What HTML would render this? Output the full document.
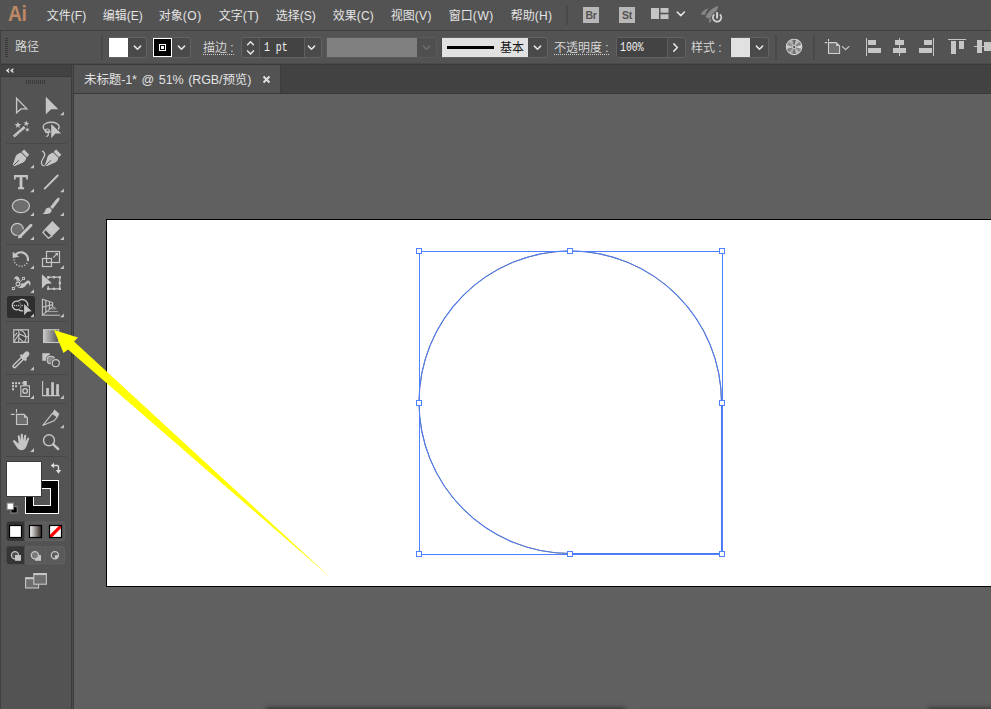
<!DOCTYPE html>
<html lang="zh-CN">
<head>
<meta charset="utf-8">
<title>未标题-1* @ 51% (RGB/预览)</title>
<style>
html,body{margin:0;padding:0;}
body{width:991px;height:709px;overflow:hidden;position:relative;background:#606060;
  font-family:"Liberation Sans","Noto Sans CJK SC",sans-serif;font-size:12px;color:#dcdcdc;}
.abs{position:absolute;}
#menubar{left:0;top:0;width:991px;height:30px;background:#535353;}
#menubar .mi{position:absolute;top:2px;height:30px;line-height:29px;font-size:12px;color:#e4e4e4;white-space:nowrap;}
#logo{position:absolute;left:8px;top:0;height:30px;line-height:28px;font-size:22.5px;font-weight:bold;color:#bd8864;letter-spacing:-0.5px;transform-origin:0 50%;transform:scaleX(0.86);}
#tabstrip{left:74px;top:65px;width:917px;height:29px;background:#424242;border-bottom:1px solid #3a3a3a;box-sizing:border-box;}
#doctab{left:0;top:0;width:206px;height:28px;background:#535353;border-right:1px solid #3c3c3c;}
#doctab .t{position:absolute;left:10px;top:1px;line-height:28px;font-size:12.5px;color:#e2e2e2;white-space:nowrap;word-spacing:1.3px;letter-spacing:-0.1px;}
#toolbar{left:0;top:65px;width:72px;height:644px;background:#535353;}
#tbhead{left:0;top:0;width:72px;height:12px;background:#424242;border-bottom:1px solid #3a3a3a;box-sizing:border-box;}
#tbborder{left:71px;top:65px;width:3px;height:644px;background:linear-gradient(to right,#3c3c3c 0,#3c3c3c 1px,#4c4c4c 1px,#4c4c4c 2px,#3c3c3c 2px);}
#canvas{left:74px;top:94px;width:917px;height:615px;background:#606060;}
#artboard{left:106px;top:219px;width:900px;height:366px;background:#fff;border:1px solid #000;}

#ctrlbar{left:0;top:30px;width:991px;height:35px;background:#535353;border:none;}
.hl{position:absolute;left:0;width:991px;height:1px;}
.vsep{position:absolute;top:5px;width:2px;height:25px;background:#4a4a4a;}
.grp{position:absolute;top:7px;height:21px;box-sizing:border-box;border:1px solid #626262;border-radius:3px;background:#4a4a4a;overflow:hidden;}
.grp>*{position:absolute;top:0;height:19px;}
.grp.sq{border-radius:0 3px 3px 0;border-left-color:transparent;}
.fld{background:#434343;}
.appb{width:16px;height:16px;background:#b8b8b8;color:#535353;font-size:10.5px;line-height:17px;text-align:center;font-weight:bold;letter-spacing:-0.3px;}
.lbl{position:absolute;white-space:nowrap;color:#dcdcdc;font-size:12px;line-height:12px;height:12px;font-weight:350;}
.dot{border-bottom:1px dotted #d0d0d0;padding-bottom:0;}
</style>
</head>
<body>
<!-- MENU BAR -->
<div id="menubar" class="abs">
  <div id="logo">Ai</div>
  <div class="mi" style="left:46.8px">文件<span style="letter-spacing:0.00px">(F)</span></div>
  <div class="mi" style="left:102.8px">编辑<span style="letter-spacing:0.00px">(E)</span></div>
  <div class="mi" style="left:158.8px">对象<span style="letter-spacing:0.53px">(O)</span></div>
  <div class="mi" style="left:218.8px">文字<span style="letter-spacing:0.33px">(T)</span></div>
  <div class="mi" style="left:275.8px">选择<span style="letter-spacing:0.03px">(S)</span></div>
  <div class="mi" style="left:332.8px">效果<span style="letter-spacing:0.20px">(C)</span></div>
  <div class="mi" style="left:390.8px">视图<span style="letter-spacing:0.30px">(V)</span></div>
  <div class="mi" style="left:448.8px">窗口<span style="letter-spacing:0.60px">(W)</span></div>
  <div class="mi" style="left:510.8px">帮助<span style="letter-spacing:0.27px">(H)</span></div>
  
  <div class="abs" style="left:566px;top:5px;width:2px;height:20px;background:#494949"></div>
  <div class="abs appb" style="left:583px;top:7px">Br</div>
  <div class="abs appb" style="left:619px;top:7px">St</div>
  <svg class="abs" style="left:640px;top:0" width="100" height="30" viewBox="640 0 100 30">
    <rect x="651" y="8" width="8" height="11" fill="#c4c4c4"/>
    <rect x="660.5" y="8" width="8" height="4.7" fill="#c4c4c4"/>
    <rect x="660.5" y="14.3" width="8" height="4.7" fill="#c4c4c4"/>
    <path d="M677.2 12 L680.8 15.6 L684.4 12" fill="none" stroke="#e6e6e6" stroke-width="1.5" stroke-linecap="round" stroke-linejoin="round"/>
    <!-- rocket (GPU preview) -->
    <g fill="#868686">
      <path d="M718.2 5.9 C713.5 7 708 11.5 705.5 16.6 L707.8 18.7 L711.2 17.4 C714.8 14.5 717.8 10 718.2 5.9 Z"/>
      <path d="M708.6 8.3 C705 9 702.2 11.6 700.8 14.4 L705 15 C705.6 12.6 707 10.2 708.6 8.3 Z"/>
      <path d="M709.3 18.9 L709 23 C710.4 22.3 711.3 21.2 711.4 20 L711.2 18 Z"/>
    </g>
    <circle cx="717.1" cy="17.6" r="5.9" fill="#535353"/>
    <rect x="715.3" y="11.2" width="3.6" height="4" fill="#535353"/>
    <path d="M714.3 14.3 A4.2 4.2 0 1 0 719.9 14.3" fill="none" stroke="#d2d2d2" stroke-width="1.7"/>
    <rect x="716.1" y="12.1" width="2" height="6.4" fill="#d2d2d2"/>
  </svg>

</div>

<!-- CONTROL BAR -->
<div id="ctrlbar" class="abs">
  
  <div class="hl" style="top:0;background:#404040"></div>
  <div class="hl" style="top:33px;background:#4a4a4a"></div>
  <div class="hl" style="top:34px;background:#3a3a3a"></div>
  <div class="abs" style="left:0;top:0;width:1px;height:35px;background:#404040"></div>
  <!-- gripper -->
  <div class="abs" style="left:5px;top:8px;width:3px;height:19px;background:repeating-linear-gradient(to bottom,#3a3a3a 0,#3a3a3a 1px,transparent 1px,transparent 2px)"></div>
  <div class="lbl" style="left:15px;top:11px">路径</div>
  <div class="vsep" style="left:101px"></div>
  <!-- fill -->
  <div class="grp sq" style="left:108px;width:39px"><div style="left:0;width:19px;background:#fff"></div></div>
  <!-- stroke -->
  <div class="grp sq" style="left:152px;width:39px"><div style="left:0;width:19px;background:#000;box-sizing:border-box;border:1px solid #fff"></div>
    <div style="left:6px;top:6px;width:7px;height:7px;box-sizing:border-box;border:1px solid #fff;background:#000"></div>
    <div style="left:8px;top:8px;width:3px;height:3px;background:#fff"></div>
  </div>
  <div class="lbl dot" style="left:203px;top:12px">描边 :</div>
  <!-- stepper -->
  <div class="grp" style="left:241px;width:81px"><div class="fld" style="left:18px;width:44px"></div>
    <div style="left:22px;top:3px;height:14px;font:12px/14px 'Liberation Mono',monospace;color:#f4f4f4;white-space:pre;transform-origin:0 50%;transform:scaleX(0.82)">1 pt</div><div style="left:17px;width:1px;background:#5e5e5e"></div><div style="left:62px;width:1px;background:#5e5e5e"></div></div>
  <!-- variable width profile (disabled) -->
  <div class="grp sq" style="left:326px;width:111px;border-color:#5a5a5a;background:#505050"><div style="left:0;width:90px;background:#808080"></div></div>
  <!-- brush -->
  <div class="grp sq" style="left:441px;width:107px"><div style="left:0;width:86px;background:#e1e1e1"></div>
    <div style="left:5px;top:8px;width:47px;height:3px;background:#000"></div>
    <div style="left:58px;top:3px;height:14px;font-size:12px;line-height:14px;font-weight:400;color:#151515;white-space:nowrap">基本</div></div>
  <div class="lbl dot" style="left:554px;top:12px">不透明度 :</div>
  <!-- opacity -->
  <div class="grp" style="left:616px;width:70px"><div class="fld" style="left:0;width:51px"></div>
    <div style="left:3px;top:3px;height:14px;font:12px/14px 'Liberation Mono',monospace;color:#f4f4f4;white-space:nowrap;transform-origin:0 50%;transform:scaleX(0.82)">100%</div><div style="left:50px;width:1px;background:#5e5e5e"></div></div>
  <div class="lbl" style="left:691px;top:12px">样式 :</div>
  <!-- style -->
  <div class="grp sq" style="left:730px;width:39px"><div style="left:0;width:19px;background:#e1e1e1"></div></div>
  <div class="vsep" style="left:775px"></div>
  <div class="vsep" style="left:813px"></div>
  <svg class="abs" style="left:0;top:0" width="991" height="35" viewBox="0 30 991 35">
    <path d="M134.40 46.15 L137.50 49.25 L140.60 46.15" fill="none" stroke="#e6e6e6" stroke-width="1.5" stroke-linecap="round" stroke-linejoin="round"/>
    <path d="M178.40 46.15 L181.50 49.25 L184.60 46.15" fill="none" stroke="#e6e6e6" stroke-width="1.5" stroke-linecap="round" stroke-linejoin="round"/>
    <path d="M247.60 44.70 L250.50 41.70 L253.40 44.70" fill="none" stroke="#e6e6e6" stroke-width="1.5" stroke-linecap="round" stroke-linejoin="round"/>
    <path d="M247.60 50.90 L250.50 53.90 L253.40 50.90" fill="none" stroke="#e6e6e6" stroke-width="1.5" stroke-linecap="round" stroke-linejoin="round"/>
    <path d="M308.40 46.15 L311.50 49.25 L314.60 46.15" fill="none" stroke="#e6e6e6" stroke-width="1.5" stroke-linecap="round" stroke-linejoin="round"/>
    <path d="M423.40 46.15 L426.50 49.25 L429.60 46.15" fill="none" stroke="#6e6e6e" stroke-width="1.5" stroke-linecap="round" stroke-linejoin="round"/>
    <path d="M534.40 46.15 L537.50 49.25 L540.60 46.15" fill="none" stroke="#e6e6e6" stroke-width="1.5" stroke-linecap="round" stroke-linejoin="round"/>
    <path d="M673.8 43.9 L677.4 47.5 L673.8 51.1" fill="none" stroke="#e6e6e6" stroke-width="1.5" stroke-linecap="round" stroke-linejoin="round"/>
    <path d="M756.40 46.15 L759.50 49.25 L762.60 46.15" fill="none" stroke="#e6e6e6" stroke-width="1.5" stroke-linecap="round" stroke-linejoin="round"/>
    <!-- recolor artwork -->
    <circle cx="794.1" cy="46.9" r="7.7" fill="#9a9a9a" stroke="#d4d4d4" stroke-width="1.1"/>
    <path d="M796.24 46.39 L801.10 45.22 A7.2 7.2 0 0 1 801.10 48.58 L796.24 47.41 Z" fill="#d8d8d8"/><path d="M796.21 47.52 L801.00 48.94 A7.2 7.2 0 0 1 799.32 51.86 L795.70 48.41 Z" fill="#8c8c8c"/><path d="M795.61 48.50 L799.06 52.12 A7.2 7.2 0 0 1 796.14 53.80 L794.72 49.01 Z" fill="#b8b8b8"/><path d="M794.61 49.04 L795.78 53.90 A7.2 7.2 0 0 1 792.42 53.90 L793.59 49.04 Z" fill="#707070"/><path d="M793.48 49.01 L792.06 53.80 A7.2 7.2 0 0 1 789.14 52.12 L792.59 48.50 Z" fill="#a6a6a6"/><path d="M792.50 48.41 L788.88 51.86 A7.2 7.2 0 0 1 787.20 48.94 L791.99 47.52 Z" fill="#7c7c7c"/><path d="M791.96 47.41 L787.10 48.58 A7.2 7.2 0 0 1 787.10 45.22 L791.96 46.39 Z" fill="#c8c8c8"/><path d="M791.99 46.28 L787.20 44.86 A7.2 7.2 0 0 1 788.88 41.94 L792.50 45.39 Z" fill="#909090"/><path d="M792.59 45.30 L789.14 41.68 A7.2 7.2 0 0 1 792.06 40.00 L793.48 44.79 Z" fill="#b0b0b0"/><path d="M793.59 44.76 L792.42 39.90 A7.2 7.2 0 0 1 795.78 39.90 L794.61 44.76 Z" fill="#6c6c6c"/><path d="M794.72 44.79 L796.14 40.00 A7.2 7.2 0 0 1 799.06 41.68 L795.61 45.30 Z" fill="#c0c0c0"/><path d="M795.70 45.39 L799.32 41.94 A7.2 7.2 0 0 1 801.00 44.86 L796.21 46.28 Z" fill="#848484"/>
    <circle cx="794.1" cy="46.9" r="1.9" fill="#d0d0d0"/>
    <circle cx="794.1" cy="46.9" r="1" fill="#3a3a3a"/>
    <!-- artboard options -->
    <path d="M828.5 42.6 L836.2 42.6 L839.6 46 L839.6 53.5 L828.5 53.5 Z" fill="#707070" stroke="#d0d0d0" stroke-width="1.1"/>
    <path d="M836.2 42.6 L836.2 46 L839.6 46 Z" fill="#d0d0d0"/>
    <path d="M828.5 39 L828.5 41.4 M824.8 42.6 L827.2 42.6" stroke="#d0d0d0" stroke-width="1.1" fill="none"/>
    <path d="M842.4 46.6 L845.6 49.6 L848.8 46.6" fill="none" stroke="#c8c8c8" stroke-width="1.3" stroke-linecap="round" stroke-linejoin="round"/>
    <!-- align -->
    <g fill="#c6c6c6">
      <rect x="866" y="38" width="1" height="18"/><rect x="868" y="40" width="8" height="5"/><rect x="868" y="48" width="13" height="5"/>
      <rect x="899" y="38" width="1" height="18"/><rect x="895" y="40" width="9" height="5"/><rect x="893" y="48" width="13" height="5"/>
      <rect x="933" y="38" width="1" height="18"/><rect x="924" y="40" width="8" height="5"/><rect x="919" y="48" width="13" height="5"/>
      <rect x="948" y="39" width="18" height="1"/><rect x="951" y="41" width="5" height="13"/><rect x="959" y="41" width="5" height="8"/>
      <rect x="974" y="46" width="17" height="1"/><rect x="977" y="40" width="5" height="13"/><rect x="984" y="42" width="7" height="9"/>
    </g>

  </svg>

</div>

<!-- TAB STRIP -->
<div id="tabstrip" class="abs">
  <div id="doctab" class="abs"><span class="t">未标题-1* @ 51% (RGB/预览)</span>
  <svg class="abs" style="left:188px;top:10px" width="9" height="9" viewBox="0 0 9 9"><path d="M1.5 1.5 L7.5 7.5 M7.5 1.5 L1.5 7.5" stroke="#e0e0e0" stroke-width="2" fill="none"/></svg>
  </div>
</div>

<!-- CANVAS -->
<div id="canvas" class="abs"></div>
<div id="artboard" class="abs"></div>
<svg class="abs" style="left:0;top:0" width="991" height="709" viewBox="0 0 991 709">
  <!-- path (1pt black stroke at 51%) -->
  <path id="shp" d="M419 402.25 A151.25 151.25 0 0 1 721.5 402.25 L721.5 553.5 L570.25 553.5 A151.25 151.25 0 0 1 419 402.25 Z" fill="none" stroke="#000" stroke-width="0.6"/>
  <path d="M419 402.25 A151.25 151.25 0 0 1 721.5 402.25 L721.5 553.5 L570.25 553.5 A151.25 151.25 0 0 1 419 402.25 Z" fill="none" stroke="#4a7cff" stroke-width="1.05" opacity="0.93"/>
  <!-- bounding box -->
  <rect x="419.5" y="251.5" width="303" height="303" fill="none" stroke="#4f80ff" stroke-width="1"/>
  <g fill="#fff" stroke="#4f80ff" stroke-width="1">
    <rect x="416.5" y="248.5" width="5" height="5"/>
    <rect x="567.5" y="248.5" width="5" height="5"/>
    <rect x="719.5" y="248.5" width="5" height="5"/>
    <rect x="416.5" y="400.5" width="5" height="5"/>
    <rect x="719.5" y="400.5" width="5" height="5"/>
    <rect x="416.5" y="551.5" width="5" height="5"/>
    <rect x="567.5" y="551.5" width="5" height="5"/>
    <rect x="719.5" y="551.5" width="5" height="5"/>
  </g>
</svg>

<div class="abs" style="left:268px;top:710px;width:355px;height:10px;box-shadow:0 0 5px 2px rgba(0,0,0,0.55)"></div>
<div class="abs" style="left:640px;top:711px;width:280px;height:10px;box-shadow:0 0 3px 1px rgba(0,0,0,0.35)"></div>
<div class="abs" style="left:930px;top:710px;width:100px;height:10px;box-shadow:0 0 5px 2px rgba(0,0,0,0.5)"></div>
<!-- TOOLBAR -->
<div id="toolbar" class="abs">
  <div id="tbhead" class="abs"></div><div class="abs" style="left:0;top:0;width:1px;height:644px;background:#404040"></div>
  <!--TOOLS_BEGIN--><svg class="abs" style="left:0;top:0" width="72" height="644" viewBox="0 65 72 644">
<g fill="#e0e0e0"><path d="M9.2 68 L5.8 70.6 L9.2 73.2 L9.2 71.4 L8.1 70.6 L9.2 69.8 Z"/><path d="M13.4 68 L10 70.6 L13.4 73.2 L13.4 71.4 L12.3 70.6 L13.4 69.8 Z"/></g>
<g fill="#3a3a3a"><rect x="26" y="80" width="1" height="4"/><rect x="28" y="80" width="1" height="4"/><rect x="30" y="80" width="1" height="4"/><rect x="32" y="80" width="1" height="4"/><rect x="34" y="80" width="1" height="4"/><rect x="36" y="80" width="1" height="4"/><rect x="38" y="80" width="1" height="4"/><rect x="40" y="80" width="1" height="4"/><rect x="42" y="80" width="1" height="4"/><rect x="44" y="80" width="1" height="4"/></g>
<g fill="#474747"><rect x="6" y="143.0" width="60" height="1"/><rect x="6" y="244.0" width="60" height="1"/><rect x="6" y="321.0" width="60" height="1"/><rect x="6" y="374.0" width="60" height="1"/><rect x="6" y="403.0" width="60" height="1"/><rect x="6" y="456.0" width="60" height="1"/></g>
<rect x="7" y="296" width="28" height="22" rx="2.5" fill="#2e2e2e"/>
<g fill="#c6c6c6"><path d="M63.9 111.4 L63.9 115.2 L60.1 115.2 Z"/><path d="M34.0 164.4 L34.0 168.2 L30.2 168.2 Z"/><path d="M34.0 188.5 L34.0 192.3 L30.2 192.3 Z"/><path d="M63.9 188.5 L63.9 192.3 L60.1 192.3 Z"/><path d="M34.0 212.2 L34.0 216.0 L30.2 216.0 Z"/><path d="M63.9 212.2 L63.9 216.0 L60.1 216.0 Z"/><path d="M34.0 236.3 L34.0 240.1 L30.2 240.1 Z"/><path d="M63.9 236.3 L63.9 240.1 L60.1 240.1 Z"/><path d="M34.0 265.2 L34.0 269.0 L30.2 269.0 Z"/><path d="M63.9 265.2 L63.9 269.0 L60.1 269.0 Z"/><path d="M34.0 289.2 L34.0 293.0 L30.2 293.0 Z"/><path d="M34.0 313.4 L34.0 317.2 L30.2 317.2 Z"/><path d="M63.9 313.4 L63.9 317.2 L60.1 317.2 Z"/><path d="M34.0 366.4 L34.0 370.2 L30.2 370.2 Z"/><path d="M34.0 395.1 L34.0 398.9 L30.2 398.9 Z"/><path d="M63.9 395.1 L63.9 398.9 L60.1 398.9 Z"/><path d="M63.9 424.5 L63.9 428.3 L60.1 428.3 Z"/><path d="M34.0 448.1 L34.0 451.9 L30.2 451.9 Z"/></g>
<path d="M16.6 98.4 L16.6 112.8 L21 108.9 L26.8 108.9 Z" fill="none" stroke="#c6c6c6" stroke-width="1.35" stroke-linejoin="miter"/>
<path d="M45.8 96.8 L45.8 114.3 L51.2 109.2 L58.4 109.2 Z" fill="#c6c6c6"/>
<g fill="#c6c6c6">
<path d="M12.9 135.5 L23.7 126.0 L25.5 128.0 L14.7 137.5 Z"/>
<path d="M17.90 121.50 L18.75 123.93 L21.32 123.99 L19.28 125.55 L20.02 128.01 L17.90 126.55 L15.78 128.01 L16.52 125.55 L14.48 123.99 L17.05 123.93 Z"/>
<path d="M26.84 120.55 L27.20 122.73 L29.37 123.17 L27.40 124.19 L27.66 126.39 L26.08 124.83 L24.07 125.75 L25.06 123.77 L23.56 122.14 L25.75 122.48 Z"/>
<path d="M26.88 127.34 L27.74 128.80 L29.42 128.57 L28.29 129.84 L29.03 131.37 L27.47 130.68 L26.25 131.86 L26.42 130.17 L24.92 129.37 L26.58 129.01 Z"/>
</g>
<path d="M15.2 135.4 L16.2 136.6 M17.2 133.7 L18.2 134.9 M19.2 132 L20.2 133.2 M21.2 130.2 L22.2 131.4" stroke="#535353" stroke-width="0.5"/>
<path d="M51 132 C46.5 131.8 43.2 129.7 43.2 127 C43.2 124.1 46.8 122.2 51.3 122.2 C55.8 122.2 59.2 124.2 59.2 126.8 C59.2 127.8 58.8 128.7 58 129.4" fill="none" stroke="#c6c6c6" stroke-width="1.4"/>
<ellipse cx="47.2" cy="130.8" rx="2.1" ry="1.8" fill="none" stroke="#c6c6c6" stroke-width="1.2"/>
<path d="M47.6 132.6 C49.2 133.6 48.6 136 46 136.5" fill="none" stroke="#c6c6c6" stroke-width="1.2"/>
<path d="M51.2 124 L51.2 138.2 L55.4 133.6 L61.2 133.6 Z" fill="#c6c6c6" stroke="#535353" stroke-width="1" paint-order="stroke"/>
<g transform="translate(0 0)">
<path d="M12.7 164.9 L15.6 156.4 C16.2 154.8 18.6 153 21 152.4 L26.3 157.8 C25.9 160 24.6 161.8 23 162.6 L14.5 166.3 Z" fill="#c6c6c6"/>
<path d="M21.6 151.8 L24.1 149.6 L29.2 154.8 L26.8 157.2 Z" fill="#c6c6c6"/>
<path d="M13.5 165.5 L18.9 160.2" stroke="#535353" stroke-width="1" fill="none"/>
</g>
<g transform="translate(32.1 0)">
<path d="M12.7 164.9 L15.6 156.4 C16.2 154.8 18.6 153 21 152.4 L26.3 157.8 C25.9 160 24.6 161.8 23 162.6 L14.5 166.3 Z" fill="#c6c6c6"/>
<path d="M21.6 151.8 L24.1 149.6 L29.2 154.8 L26.8 157.2 Z" fill="#c6c6c6"/>
<path d="M13.5 165.5 L18.9 160.2" stroke="#535353" stroke-width="1" fill="none"/>
</g>
<path d="M42 151.2 C44 152 45 153.4 44.6 155.4 C44 158.4 41 160 41.4 163 C41.7 165 43 165.9 44.6 165.6" fill="none" stroke="#c6c6c6" stroke-width="1.3"/>
<path d="M14 174.9 L27.9 174.9 L27.9 179.4 L26.2 179.4 L26.2 177.2 L22.4 177.2 L22.4 187.3 L24.1 187.3 L24.1 189.3 L18 189.3 L18 187.3 L19.6 187.3 L19.6 177.2 L15.7 177.2 L15.7 179.4 L14 179.4 Z" fill="#c6c6c6"/>
<path d="M44.2 189.1 L58.2 175" stroke="#c6c6c6" stroke-width="1.9" fill="none"/>
<ellipse cx="20.9" cy="206" rx="8.6" ry="6.7" fill="#6e6e6e" stroke="#c6c6c6" stroke-width="1.2"/>
<g fill="#c6c6c6"><path d="M59 197.4 C60 198.2 59.4 200.2 58.4 201.6 L52.6 209 L50.2 207 L56 199.6 C57 198.4 58.2 197.2 59 197.4 Z"/>
<path d="M49.4 207.6 L51.6 209.6 C52 211.6 50.6 213.4 48.2 213.8 C46.2 214.1 44 214 42.6 213.8 C44.4 212.8 45 211.4 45.4 210 C45.9 208.4 47.6 207.4 49.4 207.6 Z"/></g>
<circle cx="17.3" cy="229.4" r="6.1" fill="#6e6e6e" stroke="#c6c6c6" stroke-width="1.2"/>
<path d="M31 225.2 L19.2 237.2" stroke="#535353" stroke-width="5" stroke-linecap="round" fill="none"/>
<path d="M17 240 L16 236 L22 238.5 Z" fill="#535353"/>
<path d="M31 225.2 L20.4 236" stroke="#c6c6c6" stroke-width="2.9" stroke-linecap="round" fill="none"/>
<path d="M18.7 234.6 L22.2 237.6 L17.8 238.6 Z" fill="#c6c6c6"/>
<path d="M52.4 221 L59.9 228.6 L52.6 235.8 L45.3 228.4 Z" fill="#c6c6c6"/>
<path d="M45.5 229.2 L52 235.8 L48.4 238.2 L43 232.4 Z" fill="#474747" stroke="#c6c6c6" stroke-width="1.4" stroke-linejoin="miter"/>
<path d="M14.42 256.91 A7.0 7.0 0 0 1 27.79 260.99" fill="none" stroke="#c6c6c6" stroke-width="2.1"/>
<g fill="#c6c6c6"><circle cx="26.66" cy="263.41" r="0.75"/><circle cx="24.61" cy="265.30" r="0.75"/><circle cx="21.97" cy="266.23" r="0.75"/><circle cx="19.19" cy="266.06" r="0.75"/><circle cx="16.69" cy="264.82" r="0.75"/><circle cx="14.88" cy="262.69" r="0.75"/><circle cx="14.04" cy="260.03" r="0.75"/></g>
<path d="M12.7 251.8 L12.7 258 L19.2 256.8 Z" fill="#c6c6c6"/>
<rect x="46.5" y="251.5" width="13" height="11" fill="none" stroke="#c6c6c6" stroke-width="1.2"/>
<rect x="42.5" y="258.5" width="9" height="8" fill="none" stroke="#c6c6c6" stroke-width="1.2"/>
<path d="M53.2 257.6 L57 253.9" fill="none" stroke="#c6c6c6" stroke-width="1.2"/>
<path d="M54.9 253 L58 253 L58 256.1 Z" fill="#c6c6c6"/>
<path d="M14.2 280 C14 277.6 15.6 276 17.4 276.4 C19.6 277 19.6 279.6 20.6 282.2 C21.6 284.6 24.4 283.6 26 281.6 C27.4 279.8 29.6 280.2 30.2 282 C30.8 283.8 30.4 285.6 29.6 286.6 C29.8 284.4 29 283 27.8 283.4 C26.2 284 25.2 287.6 21.6 288 C18.4 288.4 16.2 286.8 16.2 284 C16.2 282 17 280 16.2 279 C15.6 278.4 14.8 278.8 14.2 280 Z" fill="#c6c6c6"/>
<path d="M13.4 288.6 L23.4 278.6" stroke="#c6c6c6" stroke-width="0.9" fill="none"/>
<circle cx="17.9" cy="284" r="3" fill="none" stroke="#535353" stroke-width="0.9"/><circle cx="17.9" cy="284" r="1.9" fill="#535353" stroke="#c6c6c6" stroke-width="1.1"/>
<rect x="22.4" y="277.4" width="2.2" height="2.2" fill="#535353" stroke="#c6c6c6" stroke-width="0.9"/>
<rect x="12.3" y="287.4" width="2.2" height="2.2" fill="#535353" stroke="#c6c6c6" stroke-width="0.9"/>
<path d="M41.9 274.2 L41.9 288.6 L46.4 284 L52 283.2 Z" fill="#c6c6c6"/>
<path d="M48.2 279 L48.2 277.2 L59.8 277.2 L59.8 288.8 L48.2 288.8 L48.2 286" fill="none" stroke="#c6c6c6" stroke-width="1.2"/>
<g fill="#c6c6c6"><rect x="47.1" y="276.1" width="2.3" height="2.3"/><rect x="52.9" y="276.1" width="2.3" height="2.3"/><rect x="58.7" y="276.1" width="2.3" height="2.3"/><rect x="58.7" y="281.9" width="2.3" height="2.3"/><rect x="58.7" y="287.7" width="2.3" height="2.3"/><rect x="52.9" y="287.7" width="2.3" height="2.3"/><rect x="47.1" y="287.7" width="2.3" height="2.3"/></g>
<circle cx="22.2" cy="305.2" r="5.7" fill="none" stroke="#c6c6c6" stroke-width="1.3"/>
<circle cx="16.6" cy="305.5" r="4.3" fill="#2e2e2e" stroke="#909090" stroke-width="0.8"/>
<path d="M17.94 301.41 A4.3 4.3 0 1 0 18.37 309.42" fill="none" stroke="#c6c6c6" stroke-width="1.3"/>
<g fill="#c6c6c6"><rect x="13.8" y="304.9" width="1.2" height="1.3"/><rect x="15.9" y="304.9" width="1.2" height="1.3"/><rect x="18" y="304.9" width="1.2" height="1.3"/><rect x="21.6" y="304.9" width="1.2" height="1.3"/></g>
<path d="M23.2 301.8 L23.2 317 L27.6 312.6 L33.4 312 Z" fill="#2e2e2e"/>
<path d="M24.1 304 L24.1 315.2 L27.4 311.7 L31.7 311.3 Z" fill="#c6c6c6"/>
<path d="M42.4 299.2 L42.4 315.2 L52.6 306.8 L52.6 302.6 Z M45.8 300.4 L45.8 312.4 M49.4 301.6 L49.4 309.4 M42.4 307.2 L52.6 304.6" fill="none" stroke="#c6c6c6" stroke-width="1.1" stroke-linejoin="miter"/>
<path d="M42.6 315.2 L60 315.2" stroke="#c6c6c6" stroke-width="1" fill="none"/>
<path d="M47.5 311.6 L58 311.6" stroke="#a8a8a8" stroke-width="1" fill="none"/>
<path d="M53 306.6 L54.8 306.6 L57 309.6 L50 309.6 Z" fill="#8a8a8a"/>
<rect x="13.8" y="329.8" width="14.6" height="12.5" fill="#474747" stroke="#c6c6c6" stroke-width="1.25"/>
<path d="M20 329.8 C25.4 331.8 27.8 337.4 24.4 342.3 M26.4 336.7 L28.4 336.7 M14 342 C15.6 339.6 17.6 336.4 18.9 333.8 C19.4 332.4 18.8 330.8 17.6 329.8 M18.9 333.8 L26.2 337 M18.9 337.8 L23.4 341.8 M18.9 333.8 L18.7 342 M13.8 336.4 C15.2 335.6 16.4 334.2 17.2 332.6" fill="none" stroke="#c6c6c6" stroke-width="1.05"/>
<defs><linearGradient id="gt" x1="0" x2="1" y1="0" y2="0"><stop offset="0" stop-color="#c8c8c8"/><stop offset="1" stop-color="#555"/></linearGradient></defs>
<rect x="43.5" y="329.7" width="15.2" height="12.8" fill="url(#gt)" stroke="#c6c6c6" stroke-width="1.1"/>
<path d="M22.8 358 L14.5 366.2" fill="none" stroke="#c6c6c6" stroke-width="4.4" stroke-linecap="round"/>
<path d="M22 358.8 L14.7 366" fill="none" stroke="#535353" stroke-width="1.5" stroke-linecap="round"/>
<path d="M20.6 354.8 L26.2 360.4" fill="none" stroke="#c6c6c6" stroke-width="2.6"/>
<path d="M23.8 357.2 L26.8 354" fill="none" stroke="#c6c6c6" stroke-width="5.2" stroke-linecap="round"/>
<rect x="42.3" y="353.2" width="7.4" height="7.6" fill="#c6c6c6"/>
<rect x="47.2" y="356.2" width="7.4" height="7.6" rx="3.2" fill="#535353" stroke="#535353" stroke-width="2.6"/>
<rect x="47.2" y="356.2" width="7.4" height="7.6" rx="3.2" fill="#8c8c8c" stroke="#c6c6c6" stroke-width="1.1"/>
<circle cx="55.8" cy="363.2" r="3.5" fill="#535353" stroke="#535353" stroke-width="2.8"/>
<circle cx="55.8" cy="363.2" r="3.5" fill="#535353" stroke="#c6c6c6" stroke-width="1.2"/>
<g fill="#c6c6c6"><rect x="12" y="382.2" width="2" height="2"/><rect x="15.1" y="382.2" width="2" height="2"/><rect x="18.2" y="382.2" width="2" height="2"/><rect x="12" y="385.2" width="2" height="2"/><rect x="15.1" y="385.2" width="2" height="2"/><rect x="12" y="388.3" width="2" height="2"/>
<rect x="23.2" y="381" width="3.6" height="4.4"/><rect x="21.8" y="382.4" width="2" height="1.2"/></g>
<rect x="20.8" y="385.8" width="8.6" height="10.6" fill="none" stroke="#c6c6c6" stroke-width="1.1"/>
<circle cx="25.1" cy="390.9" r="2.3" fill="none" stroke="#c6c6c6" stroke-width="1.4"/>
<path d="M42.6 381 L42.6 395.6 L59.8 395.6" fill="none" stroke="#c6c6c6" stroke-width="1.1"/>
<g fill="#c6c6c6"><rect x="46.2" y="388" width="2.7" height="7"/><rect x="51.2" y="382.2" width="2.7" height="12.8"/><rect x="56.2" y="384.2" width="2.7" height="10.8"/></g>
<path d="M16.5 414.4 L24 414.4 L27.4 417.8 L27.4 424.5 L16.5 424.5 Z" fill="#6e6e6e" stroke="#c6c6c6" stroke-width="1.2"/>
<path d="M24 414.4 L24 417.8 L27.4 417.8 Z" fill="#c6c6c6"/>
<path d="M16.5 408.9 L16.5 412.8 M10.9 414.4 L14.8 414.4" stroke="#c6c6c6" stroke-width="1.1" fill="none"/>
<path d="M52.2 413.6 L42.6 425.6 L54 420.8 L57.4 416.8 Z" fill="none" stroke="#c6c6c6" stroke-width="1.1" stroke-linejoin="miter"/>
<path d="M52 413.2 L54.6 409.4 L59.4 414 L57.4 417.2 Z" fill="#c6c6c6"/>
<path d="M17.8 436.6 C17.6 435.2 19.4 434.8 19.8 436.2 L20.6 440.4 L20.8 434.8 C20.8 433.4 22.8 433.4 22.9 434.8 L23.2 440.2 L24.2 435.6 C24.5 434.2 26.4 434.6 26.2 436 L25.6 441.4 L27.4 438 C28 436.8 29.6 437.6 29.1 438.9 L26.8 445.6 C26 448.2 24.6 450.2 21.8 450.2 C19.6 450.2 18.2 449.2 17 447.4 L13 441.6 C12.4 440.4 14 439.6 15 440.6 L18.2 443.6 L18.6 443.2 Z" fill="#c6c6c6"/>
<circle cx="49" cy="440.3" r="5.5" fill="none" stroke="#c6c6c6" stroke-width="1.4"/>
<path d="M53.2 444.4 L58.2 449" stroke="#c6c6c6" stroke-width="2.4" stroke-linecap="round" fill="none"/>
<rect x="25.5" y="480.5" width="33" height="33" fill="#000" stroke="#fff" stroke-width="1"/>
<rect x="33.5" y="488.5" width="17" height="17" fill="#535353" stroke="#fff" stroke-width="1"/>
<rect x="6.5" y="461.5" width="35" height="35" fill="#fff" stroke="#3c3c3c" stroke-width="1"/>
<path d="M53.4 465.5 L57 465.5 C58 465.5 58.5 466 58.5 467 L58.5 470.2" fill="none" stroke="#dadada" stroke-width="1.4"/>
<path d="M50.7 465.5 L54 462.8 L54 468.2 Z M58.5 473.7 L55.8 470 L61.2 470 Z" fill="#dadada"/>
<rect x="10.9" y="506.7" width="6.3" height="6.3" fill="#000" stroke="#8a8a8a" stroke-width="1"/>
<rect x="7.1" y="503.1" width="6.3" height="6.3" fill="#fff" stroke="#8a8a8a" stroke-width="1"/>
<rect x="7" y="522" width="57.5" height="18.6" rx="2.5" fill="#5a5a5a" stroke="#626262" stroke-width="1"/>
<path d="M9.5 521.5 L25 521.5 L25 541.1 L9.5 541.1 C7.8 541.1 6.5 540 6.5 538.6 L6.5 524 C6.5 522.6 7.8 521.5 9.5 521.5 Z" fill="#353535"/>
<path d="M25 522 L25 540.6 M45.3 522 L45.3 540.6" stroke="#626262" stroke-width="1"/>
<rect x="9.5" y="525.5" width="12" height="12" fill="#fff" stroke="#000" stroke-width="1.2"/>
<defs><linearGradient id="gg" x1="0" x2="1" y1="0" y2="0"><stop offset="0" stop-color="#fff"/><stop offset="1" stop-color="#2a201c"/></linearGradient>
<clipPath id="nc"><rect x="49.5" y="525.5" width="12" height="12"/></clipPath></defs>
<rect x="29.5" y="525.5" width="12" height="12" fill="url(#gg)" stroke="#000" stroke-width="1.2"/>
<rect x="49.5" y="525.5" width="12" height="12" fill="#fff"/>
<path d="M49.5 537.5 L61.5 525.5" stroke="#f00" stroke-width="3.2" clip-path="url(#nc)"/>
<rect x="49.5" y="525.5" width="12" height="12" fill="none" stroke="#000" stroke-width="1.2"/>
<rect x="7" y="546.8" width="57.5" height="17" rx="2.5" fill="#5a5a5a" stroke="#626262" stroke-width="1"/>
<path d="M9.5 546.3 L25 546.3 L25 564.3 L9.5 564.3 C7.8 564.3 6.5 563.2 6.5 561.8 L6.5 548.8 C6.5 547.4 7.8 546.3 9.5 546.3 Z" fill="#353535"/>
<path d="M25 546.8 L25 563.8 M45.3 546.8 L45.3 563.8" stroke="#626262" stroke-width="1"/>
<circle cx="15" cy="555.3" r="3.6" fill="#505050" stroke="#c6c6c6" stroke-width="1.2"/>
<rect x="15" y="555" width="6" height="5.8" fill="#c6c6c6"/>
<rect x="35" y="555" width="6" height="5.8" fill="#c6c6c6"/>
<circle cx="34.9" cy="555.3" r="3.6" fill="#7a7a7a" stroke="#c6c6c6" stroke-width="1.2"/>
<circle cx="54.9" cy="555.3" r="3.6" fill="#5a5a5a" stroke="#c6c6c6" stroke-width="1.2"/>
<path d="M54.9 555.3 L58.5 555.3 A3.6 3.6 0 0 1 54.9 558.9 Z" fill="#c6c6c6"/>
<rect x="25.6" y="577.8" width="13" height="10.2" fill="#6e6e6e" stroke="#c6c6c6" stroke-width="1.1"/>
<rect x="25.6" y="577.4" width="13" height="1.8" fill="#c6c6c6"/>
<rect x="33.8" y="573.6" width="12.6" height="10.6" fill="#6e6e6e" stroke="#c6c6c6" stroke-width="1.1"/>
<rect x="33.8" y="573.2" width="12.6" height="1.9" fill="#c6c6c6"/>
</svg><!--TOOLS_END-->
</div>
<div id="tbborder" class="abs"></div>
<svg class="abs" style="left:0;top:0" width="991" height="709" viewBox="0 0 991 709">
  <polygon points="54,330 78,337.5 74,341.5 331,578 68,349.5 63.5,353" fill="#ffff00"/>
</svg>
</body>
</html>
